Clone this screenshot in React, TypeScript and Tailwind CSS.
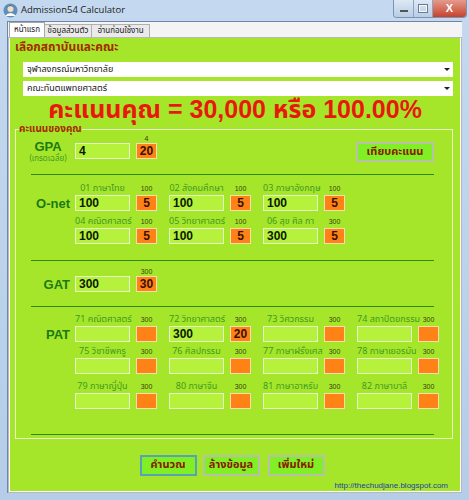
import React from "react";

const thai = "font-['Tahoma','Noto_Sans_Thai','Noto_Sans','Liberation_Sans',sans-serif]";

function Input({ v, w = "w-[55px]" }: { v?: string; w?: string }) {
  return (
    <div className={`${w} h-[16px] bg-[#b6f23c] border border-[#e4f7cc] flex items-center pl-[3px] text-[12px] font-bold text-[#0a1a00] font-['Liberation_Sans',sans-serif] leading-none`}>
      {v}
    </div>
  );
}

function Orange({ v }: { v?: string }) {
  return (
    <div className="w-[21px] h-[16px] ml-[6px] bg-[#ff8216] border border-[#f6dcae] flex items-center justify-center text-[12px] font-bold text-[#3a1000] font-['Liberation_Sans',sans-serif] leading-none">
      {v}
    </div>
  );
}

function Cell({ cap, max, v, s, ch = "h-[14px]" }: { cap?: string; max: string; v?: string; s?: string; ch?: string }) {
  return (
    <div className="flex flex-col w-[82px]">
      <div className={`flex items-center ${ch}`}>
        <span className={`w-[55px] text-center text-[9px] leading-none text-[#3f9a22] whitespace-nowrap ${thai}`}>{cap}</span>
        <span className="w-[21px] ml-[6px] text-center text-[7px] leading-none text-[#3a3a10] font-['Liberation_Sans',sans-serif]">{max}</span>
      </div>
      <div className="flex">
        <Input v={v} />
        <Orange v={s} />
      </div>
    </div>
  );
}

function RowLabel({ t, pt }: { t: string; pt: string }) {
  return (
    <div className={`w-[56px] shrink-0 ${pt}`}>
      <div className="h-[16px] flex items-center justify-end pr-[2px] text-[13px] font-bold text-[#1c7a12] font-['Liberation_Sans',sans-serif] leading-none">
        {t}
      </div>
    </div>
  );
}

function Sep() {
  return <div className="ml-[15px] w-[403px] h-px bg-[#2f8a12]" />;
}

function Btn({ t, focus }: { t: string; focus?: boolean }) {
  return (
    <div
      className={`w-[57px] h-[21px] flex items-center justify-center bg-[#80f024] border-2 ${focus ? "border-[#5aa0b8]" : "border-[#b8c0a8]"} text-[11px] font-bold text-[#8a1800] ${thai}`}
    >
      {t}
    </div>
  );
}

function Combo({ t }: { t: string }) {
  return (
    <div className="w-[430px] h-[15px] bg-white flex items-center justify-between pl-[4px] pr-[3px]">
      <span className={`text-[9px] leading-none text-[#202020] ${thai}`}>{t}</span>
      <span className="w-0 h-0 border-l-[3px] border-r-[3px] border-t-[3px] border-l-transparent border-r-transparent border-t-[#202020]" />
    </div>
  );
}

export default function App() {
  return (
    <div className="w-[469px] h-[500px] flex flex-col bg-gradient-to-b from-[#c4d9ef] to-[#b5cde8] overflow-hidden">
      {/* Title bar */}
      <div className="h-[21px] flex items-start shrink-0">
        <div className="flex items-center h-[20px] pl-[3px]">
          <svg width="15" height="15" viewBox="0 0 15 15">
            <circle cx="7.5" cy="7.5" r="7" fill="#5f8fb8" />
            <circle cx="7.5" cy="6" r="3" fill="#f3dcc4" />
            <path d="M2 13 Q7.5 7 13 13" fill="#ffffff" />
            <path d="M3 5 Q7.5 0 12 5 L11 4 Q7.5 2 4 4 Z" fill="#2a3a50" />
          </svg>
          <span className="ml-[3px] text-[9.5px] text-[#1a1a1a] font-['Open_Sans',sans-serif]">Admission54 Calculator</span>
        </div>
        <div className="flex-1" />
        <div className="flex mr-[2px] h-[18px] rounded-b-[4px] overflow-hidden border border-t-0 border-[#7d92ad]">
          <div className="w-[19px] bg-gradient-to-b from-[#dde8f5] to-[#b8cde6] flex items-end justify-center pb-[5px]">
            <div className="w-[8px] h-[2px] bg-white border border-[#555]" />
          </div>
          <div className="w-[19px] bg-gradient-to-b from-[#dde8f5] to-[#b8cde6] border-l border-[#8ea3bd] flex items-center justify-center">
            <div className="w-[8px] h-[7px] border border-[#f8f8f8] outline outline-1 outline-[#6a7a90]" />
          </div>
          <div className="w-[34px] bg-gradient-to-b from-[#e39a8c] to-[#c5402c] border-l border-[#8ea3bd] flex items-center justify-center text-white text-[11px] font-bold font-['Liberation_Sans',sans-serif]">
            X
          </div>
        </div>
      </div>

      {/* Client */}
      <div className="flex-1 mx-[7px] mb-[7px] border-t border-l border-[#6f87a6] bg-[#f4f4f4] flex flex-col">
        {/* Tab strip */}
        <div className="h-[15px] flex items-end pl-[1px] shrink-0">
          <div className={`h-[15px] w-[36px] bg-white border border-b-0 border-[#a6a6a6] flex items-center justify-center text-[8px] text-[#202020] ${thai}`}>หน้าแรก</div>
          <div className={`h-[13px] w-[47px] bg-[#eaeaea] border border-l-0 border-b-0 border-[#b0b0b0] flex items-center justify-center text-[8px] text-[#202020] ${thai}`}>ข้อมูลส่วนตัว</div>
          <div className={`h-[13px] w-[58px] bg-[#eaeaea] border border-l-0 border-b-0 border-[#b0b0b0] flex items-center justify-center text-[8px] text-[#202020] ${thai}`}>อ่านก่อนใช้งาน</div>
        </div>

        {/* Tab page */}
        <div className="flex-1 border border-[#b8b8b8] bg-white px-[1px] pb-[1px] flex">
          <div className="flex-1 bg-[#a6e62a] flex flex-col">
            <div className={`ml-[5px] text-[12px] font-bold text-[#a42a00] ${thai}`}>เลือกสถาบันและคณะ</div>
            <div className="mt-[6px] ml-[13px] flex flex-col gap-[4px]">
              <Combo t="จุฬาลงกรณ์มหาวิทยาลัย" />
              <Combo t="คณะทันตแพทยศาสตร์" />
            </div>
            <div className={`h-[27px] flex items-center justify-center text-[25px] font-bold text-[#e8180c] leading-none font-['Liberation_Sans','Tahoma','Noto_Sans_Thai',sans-serif]`}>
              คะแนนคุณ = 30,000 หรือ 100.00%
            </div>

            {/* Group box */}
            <fieldset className="mt-[1px] ml-[5px] w-[438px] h-[315px] border border-[#e6f5cc] px-0 pb-0 pt-0 min-w-0">
              <legend className={`ml-[3px] text-[10px] font-bold text-[#a42a00] leading-[10px] px-0 ${thai}`}>คะแนนของคุณ</legend>
              {/* GPA */}
              <div className="flex h-[40px]">
                <div className="w-[56px] flex flex-col items-center pl-[8px] pt-[7px]">
                  <span className="text-[13px] font-bold text-[#1c7a12] leading-[12px] font-['Liberation_Sans',sans-serif]">GPA</span>
                  <span className={`mt-[1px] text-[8px] text-[#3f9a22] leading-[10px] whitespace-nowrap ${thai}`}>(เกรดเฉลี่ย)</span>
                </div>
                <div className="ml-[3px]">
                  <Cell max="4" v="4" s="20" ch="h-[9px]" />
                </div>
                <div className="flex-1" />
                <div className="mt-[8px] mr-[18px]">
                  <div className={`w-[78px] h-[20px] flex items-center justify-center bg-[#80f024] border-2 border-[#b8c0a8] text-[11px] font-bold text-[#8a1800] ${thai}`}>เทียบคะแนน</div>
                </div>
              </div>
              <Sep />
              {/* O-net */}
              <div className="flex mt-[6px]">
                <RowLabel t="O-net" pt="pt-[14px]" />
                <div className="ml-[3px] flex flex-col gap-[3px]">
                  <div className="flex gap-[12px]">
                    <Cell cap="01 ภาษาไทย" max="100" v="100" s="5" />
                    <Cell cap="02 สังคมศึกษา" max="100" v="100" s="5" />
                    <Cell cap="03 ภาษาอังกฤษ" max="100" v="100" s="5" />
                  </div>
                  <div className="flex gap-[12px]">
                    <Cell cap="04 คณิตศาสตร์" max="100" v="100" s="5" />
                    <Cell cap="05 วิทยาศาสตร์" max="100" v="100" s="5" />
                    <Cell cap="06 สุข ศิล กา" max="300" v="300" s="5" />
                  </div>
                </div>
              </div>
              <div className="mt-[16px]">
                <Sep />
              </div>
              {/* GAT */}
              <div className="flex mt-[5px]">
                <RowLabel t="GAT" pt="pt-[10px]" />
                <div className="ml-[3px]">
                  <Cell max="300" v="300" s="30" ch="h-[10px]" />
                </div>
              </div>
              <div className="mt-[14px]">
                <Sep />
              </div>
              {/* PAT */}
              <div className="flex mt-[5px]">
                <RowLabel t="PAT" pt="pt-[14px]" />
                <div className="ml-[3px] flex flex-col">
                  <div className="flex gap-[12px]">
                    <Cell cap="71 คณิตศาสตร์" max="300" />
                    <Cell cap="72 วิทยาศาสตร์" max="300" v="300" s="20" />
                    <Cell cap="73 วิศวกรรม" max="300" />
                    <Cell cap="74 สถาปัตยกรรม" max="300" />
                  </div>
                  <div className="flex gap-[12px] mt-[2px]">
                    <Cell cap="75 วิชาชีพครู" max="300" />
                    <Cell cap="76 ศิลปกรรม" max="300" />
                    <Cell cap="77 ภาษาฝรั่งเศส" max="300" />
                    <Cell cap="78 ภาษาเยอรมัน" max="300" />
                  </div>
                  <div className="flex gap-[12px] mt-[5px]">
                    <Cell cap="79 ภาษาญี่ปุ่น" max="300" />
                    <Cell cap="80 ภาษาจีน" max="300" />
                    <Cell cap="81 ภาษาอาหรับ" max="300" />
                    <Cell cap="82 ภาษาบาลี" max="300" />
                  </div>
                </div>
              </div>
              <div className="mt-[25px]">
                <Sep />
              </div>
            </fieldset>

            {/* Buttons */}
            <div className="mt-[16px] flex justify-center gap-[6px] pr-[6px]">
              <Btn t="คำนวณ" focus />
              <Btn t="ล้างข้อมูล" />
              <div className="ml-[2px]">
                <Btn t="เพิ่มใหม่" />
              </div>
            </div>
            <div className="mt-[6px] flex justify-end pr-[12px]">
              <span className="text-[8px] leading-none text-[#1e3ca8] font-['Liberation_Sans',sans-serif]">http://thechudjane.blogspot.com</span>
            </div>
          </div>
        </div>
      </div>
    </div>
  );
}
